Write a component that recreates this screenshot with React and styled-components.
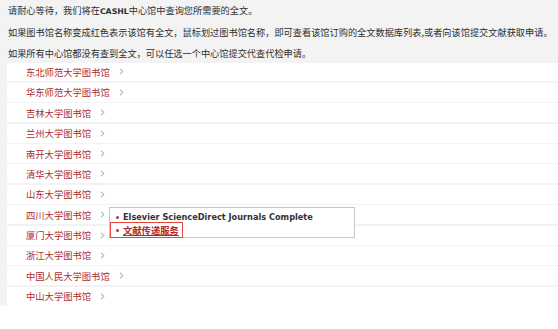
import React from 'react';
import styled, { createGlobalStyle } from 'styled-components';

const GlobalStyle = createGlobalStyle`
  html, body {
    margin: 0;
    padding: 0;
    background: #fff;
  }
  body {
    font-family: "Noto Sans CJK SC", sans-serif;
  }
`;

const libraries = [
  '东北师范大学图书馆',
  '华东师范大学图书馆',
  '吉林大学图书馆',
  '兰州大学图书馆',
  '南开大学图书馆',
  '清华大学图书馆',
  '山东大学图书馆',
  '四川大学图书馆',
  '厦门大学图书馆',
  '浙江大学图书馆',
  '中国人民大学图书馆',
  '中山大学图书馆',
];

function Chevron() {
  return (
    <ChevronIcon width="5" height="7" viewBox="0 0 5 7">
      <path d="M1 0.8 L3.8 3.5 L1 6.2" fill="none" stroke="#b4c0cf" strokeWidth="1.2" />
    </ChevronIcon>
  );
}

function App() {
  return (
    <>
      <GlobalStyle />
      <Page>
        <Notice>
          <Line>请耐心等待，我们将在<b>CASHL</b>中心馆中查询您所需要的全文。</Line>
          <Line>如果图书馆名称变成红色表示该馆有全文，鼠标划过图书馆名称，即可查看该馆订购的全文数据库列表,或者向该馆提交文献获取申请。</Line>
          <Line>如果所有中心馆都没有查到全文，可以任选一个中心馆提交代查代检申请。</Line>
        </Notice>
        <List>
          {libraries.map((name, i) => (
            <Row key={name}>
              <LibName>{name}</LibName>
              <Chevron />
              {i === 7 && (
                <Popup>
                  <PopItem>Elsevier ScienceDirect Journals Complete</PopItem>
                  <PopItem $link>文献传递服务</PopItem>
                </Popup>
              )}
            </Row>
          ))}
        </List>
      </Page>
    </>
  );
}

export default App;

const Page = styled.div`
  background: #f3f3f3;
  padding-left: 7px;
`;

const Notice = styled.div`
  padding-left: 1px;
  height: 62.5px;
`;

const Line = styled.div`
  font-family: "Noto Sans CJK SC", sans-serif;
  font-size: 9.2px;
  line-height: 21px;
  color: #2e2e2e;
  white-space: nowrap;

  b {
    font-family: "DejaVu Sans", sans-serif;
    font-size: 7.8px;
    font-weight: bold;
  }
`;

const List = styled.ul`
  list-style: none;
  margin: 0;
  padding: 0;
  display: flex;
  flex-direction: column;
  gap: 1.5px;
`;

const Row = styled.li`
  position: relative;
  background: #fff;
  height: 18.9px;
  display: flex;
  align-items: center;
  gap: 9px;
  padding-left: 19px;
`;

const LibName = styled.span`
  font-family: "Noto Sans CJK SC", sans-serif;
  font-size: 9.3px;
  color: #ab2b2f;
`;

const ChevronIcon = styled.svg`
  display: block;
  flex: none;
`;

const Popup = styled.ul`
  position: absolute;
  left: 102px;
  top: 2px;
  width: 246px;
  height: 31px;
  box-sizing: border-box;
  margin: 0;
  padding: 3px 0 0 4px;
  list-style: none;
  background: #fff;
  border: 1px solid #c8c8c8;
  z-index: 2;
`;

const PopItem = styled.li`
  position: relative;
  display: block;
  width: max-content;
  height: 12px;
  line-height: 12px;
  font-weight: bold;
  white-space: nowrap;
  color: ${p => (p.$link ? '#b0282d' : '#333')};
  text-decoration: ${p => (p.$link ? 'underline' : 'none')};
  font-family: ${p => (p.$link ? '"Noto Sans CJK SC", sans-serif' : '"DejaVu Sans", sans-serif')};
  font-size: ${p => (p.$link ? '9.3px' : '8.2px')};
  outline: ${p => (p.$link ? '1.6px solid #e8453c' : 'none')};
  outline-offset: 1px;
  margin: ${p => (p.$link ? '1px 0 0 -2px' : '0')};
  padding: ${p => (p.$link ? '0 2px 0 11px' : '0 0 0 9px')};

  &::before {
    content: '';
    position: absolute;
    left: ${p => (p.$link ? '4px' : '2px')};
    top: 5px;
    width: 3px;
    height: 3px;
    border-radius: 50%;
    background: #c0303a;
  }
`;
